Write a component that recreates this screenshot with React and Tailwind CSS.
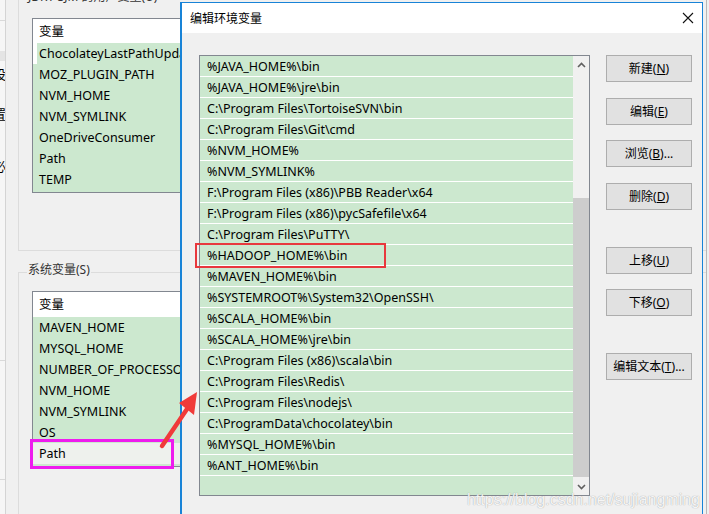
import React from 'react';

const userVars = ['ChocolateyLastPathUpdate', 'MOZ_PLUGIN_PATH', 'NVM_HOME', 'NVM_SYMLINK', 'OneDriveConsumer', 'Path', 'TEMP'];
const sysVars = ['MAVEN_HOME', 'MYSQL_HOME', 'NUMBER_OF_PROCESSORS', 'NVM_HOME', 'NVM_SYMLINK', 'OS', 'Path'];

const paths = [
  '%JAVA_HOME%\\bin',
  '%JAVA_HOME%\\jre\\bin',
  'C:\\Program Files\\TortoiseSVN\\bin',
  'C:\\Program Files\\Git\\cmd',
  '%NVM_HOME%',
  '%NVM_SYMLINK%',
  'F:\\Program Files (x86)\\PBB Reader\\x64',
  'F:\\Program Files (x86)\\pycSafefile\\x64',
  'C:\\Program Files\\PuTTY\\',
  '%HADOOP_HOME%\\bin',
  '%MAVEN_HOME%\\bin',
  '%SYSTEMROOT%\\System32\\OpenSSH\\',
  '%SCALA_HOME%\\bin',
  '%SCALA_HOME%\\jre\\bin',
  'C:\\Program Files (x86)\\scala\\bin',
  'C:\\Program Files\\Redis\\',
  'C:\\Program Files\\nodejs\\',
  'C:\\ProgramData\\chocolatey\\bin',
  '%MYSQL_HOME%\\bin',
  '%ANT_HOME%\\bin',
  ''
];

const WinButton = ({ label, hot, suffix = '', className = '' }) => (
  <button className={`w-[86px] h-[27px] border border-[#adadad] bg-[#e1e1e1] text-[12px] leading-none text-black flex items-center justify-center ${className}`}>
    {label}(<u>{hot}</u>){suffix}
  </button>
);

const Chevron = ({ up }) => (
  <svg width="9" height="6" viewBox="0 0 9 6">
    <path
      d={up ? 'M1 5 L4.5 1.5 L8 5' : 'M1 1 L4.5 4.5 L8 1'}
      fill="none"
      stroke="#606060"
      strokeWidth="1.6"
    />
  </svg>
);

const App = () => {
  return (
    <div className="relative w-[709px] h-[514px] overflow-hidden bg-[#f0f0f0] text-black font-['Noto_Sans','Noto_Sans_CJK_SC',sans-serif]">
      {/* background window */}
      <div className="flex h-full">
        {/* sliver of another window on the far left */}
        <div className="w-[6px] h-full bg-[#f6f6f6] border-r border-[#d4d4d4] overflow-hidden flex flex-col text-[13px] leading-none">
          <div className="h-[21px] border-b border-[#d9d9d9]" />
          <div className="h-[30px]" />
          <div className="h-[10px] bg-[#e4e4e4]" />
          <div className="h-[7px]" />
          <span className="-ml-[7px]">设</span>
          <div className="h-[27px]" />
          <span className="-ml-[7px]">置</span>
          <div className="h-[39px]" />
          <span className="-ml-[7px]">必</span>
          <div className="h-[188px] border-b border-[#d9d9d9]" />
          <div className="h-[119px] border-b border-[#d9d9d9]" />
        </div>

        <div className="flex-1 pl-[12px] flex flex-col">
          {/* user variables group */}
          <div className="relative h-[251px] border-l border-b border-[#dcdcdc] pl-[13px] pt-[18px]">
            <span className="absolute -top-[12px] left-[8px] text-[12px] text-[#333] bg-[#f0f0f0] px-[1px]">JDRT-SJM 的用户变量(U)</span>
            <div className="w-[240px] h-[175px] border border-[#828790] bg-[#cce8cf] overflow-hidden text-[12.5px]">
              <div className="h-[24px] bg-white pl-[6px] pt-[2px] flex items-center">变量</div>
              {userVars.map((v, i) => (
                <div
                  key={v}
                  className={`h-[21px] pl-[6px] pt-[2px] flex items-center whitespace-nowrap ${i === 0 ? 'bg-[linear-gradient(to_right,#ffffff_4px,#cce8cf_4px)]' : ''}`}
                >
                  {v}
                </div>
              ))}
            </div>
          </div>

          {/* system variables group */}
          <div className="relative mt-[21px] flex-1 border-l border-t border-[#dcdcdc] pl-[13px] pt-[18px]">
            <span className="absolute -top-[9px] left-[8px] text-[12px] text-[#333] bg-[#f0f0f0] px-[1px] leading-none">系统变量(S)</span>
            <div className="w-[240px] h-[176px] border border-[#828790] bg-[#cce8cf] overflow-hidden text-[12.5px]">
              <div className="h-[25px] bg-white pl-[6px] pt-[2px] flex items-center">变量</div>
              {sysVars.map((v, i) => (
                <div
                  key={v + i}
                  className={`h-[21px] pl-[6px] pt-[2px] flex items-center whitespace-nowrap ${i === sysVars.length - 1 ? 'bg-[#eef1ed]' : ''}`}
                >
                  {v}
                </div>
              ))}
            </div>
          </div>
        </div>

        <div className="w-[3px] h-full border-l border-[#b8b8b8] bg-[#f0f0f0]" />
      </div>

      {/* edit dialog */}
      <div className="absolute left-[180px] top-[2px] w-[523px] h-[530px] border border-l-2 border-[#1883d7] bg-[#f0f0f0] flex flex-col">
        <div className="h-[30px] bg-white flex items-center justify-between pl-[8px] pr-[4px]">
          <span className="text-[12px] font-['Noto_Sans_CJK_SC',sans-serif]">编辑环境变量</span>
          <svg width="12" height="12" viewBox="0 0 12 12" className="mr-[4px]">
            <path d="M1 1 L11 11 M11 1 L1 11" stroke="#111" strokeWidth="1.1" />
          </svg>
        </div>

        <div className="flex items-start pt-[22px] pl-[17px]">
          {/* path list */}
          <div className="w-[391px] h-[441px] border border-[#828790] bg-[#cce8cf] flex overflow-hidden">
            <div className="flex-1 flex flex-col text-[12.5px]">
              {paths.map((p, i) => (
                <div key={i} className="h-[21px] shrink-0 border-b border-white pl-[7px] pt-[2px] flex items-center whitespace-nowrap">
                  {p}
                </div>
              ))}
            </div>
            <div className="w-[16px] bg-[#f0f0f0] flex flex-col">
              <div className="h-[17px] flex items-center justify-center">
                <Chevron up />
              </div>
              <div className="flex-1">
                <div className="mt-[125px] h-[279px] bg-[#cdcdcd]" />
              </div>
              <div className="h-[17px] flex items-center justify-center">
                <Chevron />
              </div>
            </div>
          </div>

          {/* buttons */}
          <div className="ml-[16px] flex flex-col">
            <WinButton label="新建" hot="N" />
            <WinButton label="编辑" hot="E" className="mt-[16px]" />
            <WinButton label="浏览" hot="B" suffix="..." className="mt-[15px]" />
            <WinButton label="删除" hot="D" className="mt-[16px]" />
            <WinButton label="上移" hot="U" className="mt-[37px]" />
            <WinButton label="下移" hot="O" className="mt-[15px]" />
            <WinButton label="编辑文本" hot="T" suffix="..." className="mt-[37px]" />
          </div>
        </div>
      </div>

      {/* annotations */}
      <div className="absolute left-[30px] top-[439px] w-[144px] h-[30px] border-[3px] border-[#ee1cee]" />
      <div className="absolute left-[195px] top-[243px] w-[191px] h-[25px] border-2 border-[#e8383d]" />
      <svg className="absolute left-[150px] top-[380px]" width="60" height="80" viewBox="0 0 60 80">
        <path d="M12 66 L37 29" stroke="#f03a3a" strokeWidth="4.5" strokeLinecap="round" />
        <path d="M47 12 L29 23 L44 35 Z" fill="#f03a3a" />
      </svg>

      <div className="absolute right-[9px] bottom-[6px] text-[16px] leading-none text-white/90 font-['Liberation_Sans',sans-serif] [text-shadow:0_0_1px_#8a8a8a]">
        https://blog.csdn.net/sujiangming
      </div>
    </div>
  );
};

export default App;
